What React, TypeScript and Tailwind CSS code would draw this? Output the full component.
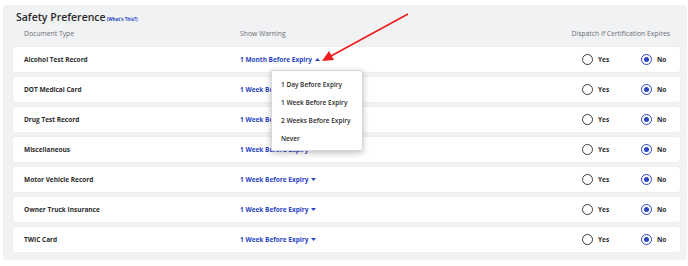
import React from "react";

const rows = [
  { name: "Alcohol Test Record", warn: "1 Month Before Expiry", open: true },
  { name: "DOT Medical Card", warn: "1 Week Before Expiry" },
  { name: "Drug Test Record", warn: "1 Week Before Expiry" },
  { name: "Miscellaneous", warn: "1 Week Before Expiry" },
  { name: "Motor Vehicle Record", warn: "1 Week Before Expiry" },
  { name: "Owner Truck Insurance", warn: "1 Week Before Expiry" },
  { name: "TWIC Card", warn: "1 Week Before Expiry" },
];

function Caret({ up }: { up?: boolean }) {
  return (
    <svg width="5" height="3" viewBox="0 0 5 3" className="ml-[3px]">
      {up ? <polygon points="0,3 5,3 2.5,0" fill="#2a45c4" /> : <polygon points="0,0 5,0 2.5,3" fill="#2a45c4" />}
    </svg>
  );
}

function Radio({ checked }: { checked?: boolean }) {
  return checked ? (
    <span className="w-[11px] h-[11px] rounded-full border-[1.5px] border-[#2a45c4] flex items-center justify-center">
      <span className="w-[5px] h-[5px] rounded-full bg-[#2a45c4]" />
    </span>
  ) : (
    <span className="w-[11px] h-[11px] rounded-full border-[1.5px] border-[#3a3a3a]" />
  );
}

export default function App() {
  return (
    <div
      className="relative w-[688px] h-[266px] bg-white pt-[5px] pl-[3px] pr-[1px] overflow-hidden"
      style={{ fontFamily: '"Open Sans", "Noto Sans", sans-serif' }}
    >
      <div className="bg-[#f1f2f4] rounded-[3px] h-[255px] pl-[10px] pr-[7px]">
        <div className="flex items-end pl-[3px] h-[17px]">
          <span className="text-[10.5px] font-semibold text-[#2b2b2b] leading-none">Safety Preference</span>
          <span className="text-[4.5px] font-bold text-[#2a45c4] leading-none ml-[1px] mb-[1px]">(What's This?)</span>
        </div>
        <div className="flex items-center h-[25px] pl-[11px] pr-[10px] text-[6.8px] text-[#6b6f76]">
          <span className="w-[216px]">Document Type</span>
          <span className="flex-1">Show Warning</span>
          <span>Dispatch if Certification Expires</span>
        </div>
        <div className="flex flex-col gap-[5px]">
          {rows.map((r) => (
            <div
              key={r.name}
              className="h-[25px] bg-white rounded-[2px] shadow-[0_0_1px_rgba(0,0,0,0.18)] flex items-center pl-[11px] pr-[12px] text-[6.5px] font-bold"
            >
              <span className="w-[216px] text-[#2b2b2b]">{r.name}</span>
              <span className="flex-1 flex items-center text-[#2a45c4]">
                {r.warn}
                <Caret up={r.open} />
              </span>
              <span className="flex items-center gap-[5px] text-[#2b2b2b]">
                <Radio />
                <span className="w-[38px]">Yes</span>
                <Radio checked />
                <span className="w-[11px]">No</span>
              </span>
            </div>
          ))}
        </div>
      </div>

      <div className="absolute left-[271px] top-[70px] w-[92px] h-[81px] bg-white border border-[#d5d9df] rounded-[2px] shadow-[0_2px_6px_rgba(0,0,0,0.25)] pt-[5px] pl-[9px] text-[6.5px] font-semibold text-[#2b2b2b]">
        {["1 Day Before Expiry", "1 Week Before Expiry", "2 Weeks Before Expiry", "Never"].map((t) => (
          <div key={t} className="h-[18px] flex items-center">{t}</div>
        ))}
      </div>

      <svg className="absolute left-0 top-0 pointer-events-none" width="688" height="266">
        <line x1="408" y1="14" x2="331" y2="56" stroke="#ee1c1c" strokeWidth="1.6" />
        <polygon points="322,61 329,51 334,60" fill="#ee1c1c" />
      </svg>
    </div>
  );
}
